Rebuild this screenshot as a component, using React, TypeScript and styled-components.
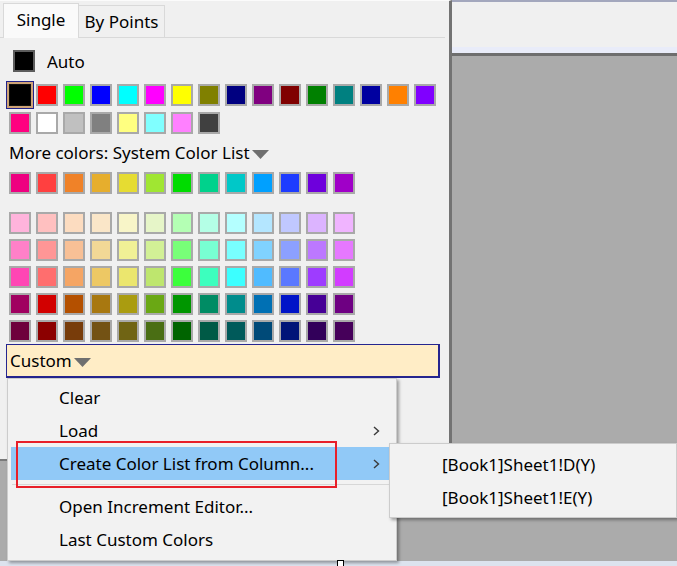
import React from "react";
import styled, { createGlobalStyle } from "styled-components";

const GlobalStyle = createGlobalStyle`
  html, body { margin: 0; padding: 0; }
  body { font-family: "Noto Sans", "Open Sans", sans-serif; overflow: hidden; color: #000; }
`;

const Screen = styled.div`
  position: relative;
  width: 677px;
  height: 566px;
  overflow: hidden;
  background: #ababab;
  display: flex;
  flex-direction: column;
`;

const Toolbar = styled.div`
  box-sizing: border-box;
  height: 56px;
  flex: none;
  border-top: 2px solid #a3a7bd;
  border-bottom: 3px solid #6e6e6e;
  background: linear-gradient(to bottom, #f0f0f0 0 45px, #e9ecf9 45px);
`;

const Workspace = styled.div`
  flex: 1;
  background: #ababab;
`;

const StatusBar = styled.div`
  height: 6px;
  flex: none;
  background: linear-gradient(to bottom, transparent 0 1px, #dce3ee 1px);
  display: flex;
`;

const Handle = styled.div`
  position: relative;
  z-index: 5;
  box-sizing: border-box;
  width: 7px;
  height: 7px;
  margin-left: 337px;
  border: 1px solid #000;
  background: #fff;
`;

const Popup = styled.div`
  position: absolute;
  left: 0;
  top: 0;
  box-sizing: border-box;
  width: 452px;
  height: 461px;
  background: #f0f0f0;
  border-top: 1px solid #fbfbfb;
  border-right: 3px solid #737373;
  border-bottom: 2px solid #7a7a7a;
  display: flex;
  flex-direction: column;
`;

const TabStrip = styled.div`
  display: flex;
  align-items: flex-end;
  height: 37px;
  box-sizing: border-box;
  padding-left: 3px;
  margin-right: 4px;
  border-bottom: 1px solid #d9d9d9;
`;

const Tab = styled.div<{ $active?: boolean }>`
  box-sizing: border-box;
  display: flex;
  align-items: center;
  justify-content: center;
  font-size: 17px;
  width: ${(p) => (p.$active ? "76px" : "86px")};
  height: ${(p) => (p.$active ? "35px" : "32px")};
  margin-bottom: ${(p) => (p.$active ? "-1px" : "0")};
  background: ${(p) => (p.$active ? "#fafafa" : "#f0f0f0")};
  border: 1px solid #d9d9d9;
  border-bottom: none;
  ${(p) => (p.$active ? "" : "border-left: none;")}
  padding-bottom: ${(p) => (p.$active ? "3px" : "1px")};
`;

const AutoRow = styled.div`
  display: flex;
  align-items: center;
  gap: 12px;
  margin: 12px 0 0 13px;
  height: 22px;
  font-size: 17px;
`;

const Swatch = styled.div<{ $selected?: boolean; $dark?: boolean }>`
  box-sizing: border-box;
  width: 22px;
  height: 22px;
  flex: none;
  border: 2px solid ${(p) => (p.$dark ? "#5c5c5c" : "#a9a9a9")};
  ${(p) =>
    p.$selected
      ? "border: 1px solid #111; box-shadow: 0 0 0 2px #cfa476, 0 0 0 3px #23238a;"
      : ""}
`;

const SwatchGrid = styled.div<{ $rowGap: number }>`
  display: flex;
  flex-direction: column;
  gap: ${(p) => p.$rowGap}px;
  margin-left: 9px;
`;

const SwatchRow = styled.div`
  display: flex;
  gap: 5px;
`;

const MainGrid = styled(SwatchGrid)`
  margin-top: 12px;
`;

const MoreLabel = styled.div`
  display: flex;
  align-items: center;
  height: 24px;
  margin: 6px 0 0 9px;
  font-size: 17px;
  gap: 2px;
`;

const SystemGrid = styled(SwatchGrid)`
  margin-top: 8px;
`;

const TintGrid = styled(SwatchGrid)`
  margin-top: 18px;
`;

const CustomBox = styled.div`
  box-sizing: border-box;
  margin: 2px 0 0 6px;
  width: 434px;
  height: 34px;
  background: #ffedc6;
  border: 1px solid #25258f;
  border-right-width: 2px;
  border-bottom-width: 2px;
  display: flex;
  align-items: center;
  padding-left: 3px;
  gap: 2px;
  font-size: 17px;
`;

const Menu = styled.div<{ $left: number; $top: number; $width: number; $height: number }>`
  position: absolute;
  left: ${(p) => p.$left}px;
  top: ${(p) => p.$top}px;
  width: ${(p) => p.$width}px;
  height: ${(p) => p.$height}px;
  box-sizing: border-box;
  background: #f2f2f2;
  border: 1px solid #cccccc;
  box-shadow: 2px 2px 3px rgba(0, 0, 0, 0.35);
  display: flex;
  flex-direction: column;
  font-size: 17px;
`;

const Item = styled.div<{ $hot?: boolean; $pad: number }>`
  position: relative;
  display: flex;
  align-items: center;
  height: 33px;
  margin: 0 6px 0 3px;
  padding-left: ${(p) => p.$pad}px;
  background: ${(p) => (p.$hot ? "#91c9f7" : "transparent")};
`;

const Chevron = styled.svg`
  position: absolute;
  right: 10px;
  top: 12px;
`;

const Separator = styled.div`
  height: 1px;
  margin: 4px 0 5px 4px;
  background: #d7d7d7;
`;

const Spacer = styled.div<{ $h: number }>`
  height: ${(p) => p.$h}px;
  flex: none;
`;

const RedBox = styled.div`
  position: absolute;
  left: 16px;
  top: 441px;
  width: 321px;
  height: 47px;
  box-sizing: border-box;
  border: 2px solid #e8202a;
`;

const Triangle = () => (
  <svg width="17" height="9" viewBox="0 0 17 9" style={{ marginTop: 4 }}>
    <path d="M0 0 H17 L8.5 9 Z" fill="#6f6f6f" />
  </svg>
);

const ChevronIcon = () => (
  <Chevron width="7" height="10" viewBox="0 0 7 10">
    <path d="M1 1 L5.5 5 L1 9" fill="none" stroke="#3a3a3a" strokeWidth="1.4" />
  </Chevron>
);

const row1 = [
  "#000000", "#ff0000", "#00ff00", "#0000ff", "#00ffff", "#ff00ff", "#ffff00", "#808000",
  "#000080", "#800080", "#800000", "#008000", "#008080", "#0000a0", "#ff8000", "#8000ff",
];
const row2 = ["#ff0080", "#ffffff", "#c0c0c0", "#808080", "#ffff80", "#80ffff", "#ff80ff", "#404040"];

const system = [
  "#ee0080", "#ff4040", "#f08228", "#e6ae2d", "#e6dc32", "#a0e632", "#00dc00",
  "#00d28c", "#00c8c8", "#00a0ff", "#1e3cff", "#6e00dc", "#a000c8",
];

const tints = [
  ["#ffb4dc", "#ffc0c0", "#fcdcc0", "#fae6c8", "#f8f5c8", "#e6f5c8", "#b4ffb4", "#b4ffe6", "#b4ffff", "#b4e6ff", "#c0c8ff", "#dcb4ff", "#f0b4ff"],
  ["#ff80c8", "#ff9696", "#f8c096", "#f2d896", "#f0f096", "#d2f096", "#78ff78", "#78ffd2", "#78ffff", "#80d2ff", "#8ca0ff", "#bc78ff", "#e678ff"],
  ["#ff46b4", "#ff6e6e", "#f5a564", "#edc864", "#ebe66e", "#bee66e", "#3cff3c", "#3cffbe", "#3cffff", "#50bbff", "#5a78ff", "#9e3cff", "#d23cff"],
  ["#a00060", "#d20000", "#b45000", "#a87810", "#aa9c10", "#6aa814", "#009600", "#008c64", "#008c8c", "#0070b4", "#0014c8", "#460096", "#6e0082"],
  ["#6e003c", "#8c0000", "#783c0a", "#735214", "#706414", "#4a6e14", "#006400", "#005a46", "#005a5a", "#004a78", "#001478", "#32005a", "#46005a"],
];

const Row = ({ colors, selectedIndex }: { colors: string[]; selectedIndex?: number }) => (
  <SwatchRow>
    {colors.map((c, i) => (
      <Swatch key={i} $selected={i === selectedIndex} style={{ background: c }} />
    ))}
  </SwatchRow>
);

export default function App() {
  return (
    <>
      <GlobalStyle />
      <Screen>
        <Toolbar />
        <Workspace />
        <StatusBar>
          <Handle />
        </StatusBar>

        <Popup>
          <TabStrip>
            <Tab $active>Single</Tab>
            <Tab>By Points</Tab>
          </TabStrip>
          <AutoRow>
            <Swatch $dark style={{ background: "#000" }} />
            <span>Auto</span>
          </AutoRow>
          <MainGrid $rowGap={6}>
            <Row colors={row1} selectedIndex={0} />
            <Row colors={row2} />
          </MainGrid>
          <MoreLabel>
            <span>More colors: System Color List</span>
            <Triangle />
          </MoreLabel>
          <SystemGrid $rowGap={5}>
            <Row colors={system} />
          </SystemGrid>
          <TintGrid $rowGap={5}>
            {tints.map((r, i) => (
              <Row key={i} colors={r} />
            ))}
          </TintGrid>
          <CustomBox>
            <span>Custom</span>
            <Triangle />
          </CustomBox>
        </Popup>

        <Menu $left={7} $top={378} $width={390} $height={183}>
          <Spacer $h={2} />
          <Item $pad={48}>Clear</Item>
          <Item $pad={48}>
            Load
            <ChevronIcon />
          </Item>
          <Item $pad={48} $hot>
            Create Color List from Column...
            <ChevronIcon />
          </Item>
          <Separator />
          <Item $pad={48}>Open Increment Editor...</Item>
          <Item $pad={48}>Last Custom Colors</Item>
        </Menu>

        <Menu $left={389} $top={443} $width={288} $height={75}>
          <Spacer $h={4} />
          <Item $pad={49}>[Book1]Sheet1!D(Y)</Item>
          <Item $pad={49}>[Book1]Sheet1!E(Y)</Item>
        </Menu>

        <RedBox />
      </Screen>
    </>
  );
}
